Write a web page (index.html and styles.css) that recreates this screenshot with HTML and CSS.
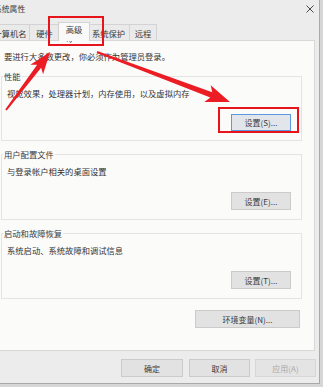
FILE: index.html
```html
<!DOCTYPE html>
<html lang="zh-CN">
<head>
<meta charset="utf-8">
<title>系统属性</title>
<link rel="stylesheet" href="styles.css">
</head>
<body>
<div class="window">
  <div class="titlebar">
    <span class="title">系统属性</span>
    <svg class="close" width="8" height="8" viewBox="0 0 8 8"><path d="M0.5 0.5 L7.5 7.5 M7.5 0.5 L0.5 7.5" stroke="#4a4a4a" stroke-width="1" fill="none"/></svg>
  </div>
  <div class="tabs">
    <div class="tab t1">计算机名</div>
    <div class="tab t2">硬件</div>
    <div class="tab t3 active">高级</div>
    <div class="tab t4">系统保护</div>
    <div class="tab t5">远程</div>
  </div>
  <div class="page">
    <p class="note">要进行大多数更改，你必须作为管理员登录。</p>
    <fieldset class="group">
      <legend>性能</legend>
      <p class="desc">视觉效果，处理器计划，内存使用，以及虚拟内存</p>
      <div class="btnrow"><button class="btn focus">设置(S)...</button></div>
    </fieldset>
    <fieldset class="group">
      <legend>用户配置文件</legend>
      <p class="desc">与登录帐户相关的桌面设置</p>
      <div class="btnrow"><button class="btn">设置(E)...</button></div>
    </fieldset>
    <fieldset class="group">
      <legend>启动和故障恢复</legend>
      <p class="desc">系统启动、系统故障和调试信息</p>
      <div class="btnrow"><button class="btn">设置(T)...</button></div>
    </fieldset>
    <div class="envrow"><button class="btn env">环境变量(N)...</button></div>
  </div>
  <div class="footer">
    <button class="btn ok">确定</button>
    <button class="btn cancel">取消</button>
    <button class="btn apply" disabled>应用(A)</button>
  </div>
</div>
<svg class="annot" width="323" height="387" viewBox="0 0 323 387">
  <rect x="49" y="17" width="54" height="28" fill="none" stroke="#e8141c" stroke-width="2"/>
  <rect x="219" y="108" width="79" height="24" fill="none" stroke="#e8141c" stroke-width="2"/>
  <polygon fill="#ec1c24" points="5.2,109.4 37.14,64.84 30.33,64.7 50,52 43.09,74.36 41.12,67.86 6.8,110.6"/>
  <polygon fill="#ec1c24" points="97.35,51.06 212.27,92.34 210.71,85.13 230,102 204.37,101.97 210.29,97.58 96.65,52.94"/>
  <path d="M67 33 L67 41.5 L69 39.6 L70.4 42.6 L71.6 42 L70.2 39.1 L72.9 39.1 Z" fill="#fff" stroke="#555" stroke-width="0.7"/>
</svg>
</body>
</html>
```
FILE: styles.css
```css
body {
  margin: 0;
  width: 323px;
  height: 387px;
  overflow: hidden;
  position: relative;
  background: #d6d6d6;
  font-family: "Noto Sans CJK SC", "Noto Sans", sans-serif;
  font-size: 8.3px;
  color: #333;
}

.window {
  box-sizing: border-box;
  margin-left: -12px;
  width: 332px;
  height: 384px;
  background: #ececec;
  border-right: 1px solid #a9a9a9;
  border-bottom: 1px solid #a9a9a9;
}

.titlebar {
  height: 17px;
  display: flex;
  align-items: center;
  justify-content: space-between;
  padding: 0 5px 0 6px;
}

.title {
  font-size: 7.8px;
  color: #3a3a3a;
}

.close {
  display: block;
}

.tabs {
  display: flex;
  align-items: flex-end;
  height: 18px;
  margin-top: 5px;
  padding-left: 2px;
}

.tab {
  box-sizing: border-box;
  height: 16px;
  border: 1px solid #d3d3d3;
  border-bottom: none;
  border-left: none;
  background: #eaeaea;
  display: flex;
  align-items: center;
  justify-content: center;
  color: #3a3a3a;
}

.t1 { width: 40px; border-left: 1px solid #d3d3d3; }
.t2 { width: 30px; }
.t3 { width: 32px; }
.t4 { width: 42px; }
.t5 { width: 27px; }

.tab.active {
  height: 19px;
  margin: 0 -2px -1px;
  padding-bottom: 6px;
  background: #f9f9f9;
  border-left: 1px solid #d0d0d0;
  position: relative;
  z-index: 1;
}

.page {
  margin: 0 4px 0 8px;
  border: 1px solid #d8d8d8;
  background: #fbfbfa;
  padding: 9px 12px 22px 4px;
}

.note {
  margin: 0 0 0 3px;
  line-height: 12px;
}

.group {
  margin: 8px 0 0;
  padding: 0 10px 9px 5px;
  border: 1px solid #e4e4e4;
  min-width: 0;
}

.group + .group {
  margin-top: 7px;
}

.group legend {
  padding: 0 1px;
  margin-left: -4px;
  line-height: 12px;
  color: #3a3a3a;
}

.desc {
  margin: 5px 0 0;
  line-height: 12px;
}

.btnrow {
  display: flex;
  justify-content: flex-end;
  margin-top: 15px;
}

.btn {
  box-sizing: border-box;
  height: 18px;
  width: 60px;
  padding: 0;
  margin: 0;
  border: 1px solid #cbcbcb;
  background: #e2e2e2;
  font-family: inherit;
  font-size: 8px;
  color: #3a3a3a;
}

.btn.focus {
  height: 17px;
  border-color: #5a9be0;
  background: #e2e5ea;
}

.envrow {
  display: flex;
  justify-content: flex-end;
  margin-top: 11px;
  padding-right: 2px;
}

.btn.env {
  width: 105px;
}

.footer {
  display: flex;
  justify-content: flex-end;
  padding: 8px 3px 0 0;
}

.btn.ok { width: 62px; margin-right: 6px; }
.btn.cancel { width: 61px; margin-right: 5px; }
.btn.apply {
  width: 61px;
  color: #a9a9a9;
  background: #e4e4e4;
  border-color: #d6d6d6;
}

.annot {
  position: absolute;
  left: 0;
  top: 0;
  pointer-events: none;
}
```
